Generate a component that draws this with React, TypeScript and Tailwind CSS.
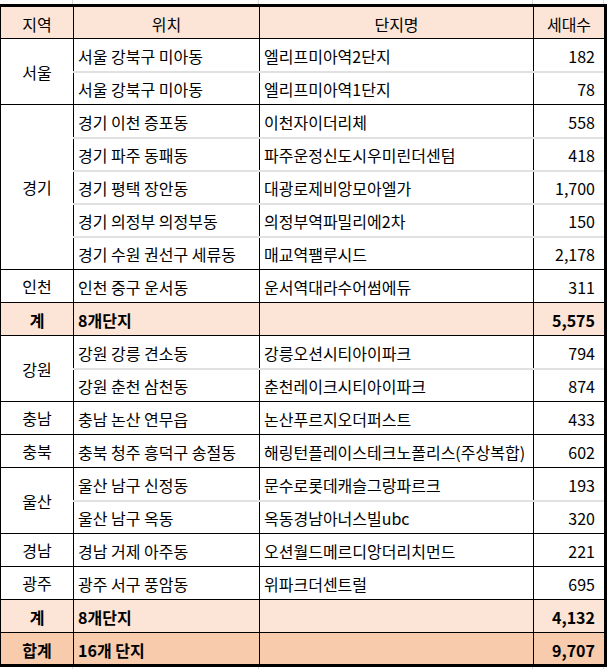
import React from "react";

type Row = { loc: string; name: string; count: string };
type Group = { region: string; rows: Row[] };

const groupsA: Group[] = [
  {
    region: "서울",
    rows: [
      { loc: "서울 강북구 미아동", name: "엘리프미아역2단지", count: "182" },
      { loc: "서울 강북구 미아동", name: "엘리프미아역1단지", count: "78" },
    ],
  },
  {
    region: "경기",
    rows: [
      { loc: "경기 이천 증포동", name: "이천자이더리체", count: "558" },
      { loc: "경기 파주 동패동", name: "파주운정신도시우미린더센텀", count: "418" },
      { loc: "경기 평택 장안동", name: "대광로제비앙모아엘가", count: "1,700" },
      { loc: "경기 의정부 의정부동", name: "의정부역파밀리에2차", count: "150" },
      { loc: "경기 수원 권선구 세류동", name: "매교역팰루시드", count: "2,178" },
    ],
  },
  {
    region: "인천",
    rows: [{ loc: "인천 중구 운서동", name: "운서역대라수어썸에듀", count: "311" }],
  },
];

const groupsB: Group[] = [
  {
    region: "강원",
    rows: [
      { loc: "강원 강릉 견소동", name: "강릉오션시티아이파크", count: "794" },
      { loc: "강원 춘천 삼천동", name: "춘천레이크시티아이파크", count: "874" },
    ],
  },
  {
    region: "충남",
    rows: [{ loc: "충남 논산 연무읍", name: "논산푸르지오더퍼스트", count: "433" }],
  },
  {
    region: "충북",
    rows: [{ loc: "충북 청주 흥덕구 송절동", name: "해링턴플레이스테크노폴리스(주상복합)", count: "602" }],
  },
  {
    region: "울산",
    rows: [
      { loc: "울산 남구 신정동", name: "문수로롯데캐슬그랑파르크", count: "193" },
      { loc: "울산 남구 옥동", name: "옥동경남아너스빌ubc", count: "320" },
    ],
  },
  {
    region: "경남",
    rows: [{ loc: "경남 거제 아주동", name: "오션월드메르디앙더리치먼드", count: "221" }],
  },
  {
    region: "광주",
    rows: [{ loc: "광주 서구 풍암동", name: "위파크더센트럴", count: "695" }],
  },
];

function GroupRows({ g }: { g: Group }) {
  return (
    <>
      {g.rows.map((r, i) => {
        const last = i === g.rows.length - 1;
        const bottom = last ? "border-b border-b-black" : "border-b-2 border-b-[#e1e1e1]";
        return (
          <tr key={i} className="h-[33px]">
            {i === 0 && (
              <td rowSpan={g.rows.length} className="border-b border-r border-black text-center align-middle">
                {g.region}
              </td>
            )}
            <td className={`${bottom} border-r border-r-black pl-[4px] pt-[2px]`}>{r.loc}</td>
            <td className={`${bottom} border-r border-r-black pl-[4px] pt-[2px]`}>{r.name}</td>
            <td className={`${bottom} border-r border-r-black pr-[9px] pt-[2px] text-right`}>{r.count}</td>
          </tr>
        );
      })}
    </>
  );
}

function SumRow({ label, desc, total, bg }: { label: string; desc: string; total: string; bg: string }) {
  return (
    <tr className={`h-[33px] font-bold ${bg}`}>
      <td className="border-b border-r border-black text-center pt-[2px]">{label}</td>
      <td className="border-b border-r border-black pl-[4px] pt-[2px]">{desc}</td>
      <td className="border-b border-r border-black"></td>
      <td className="border-b border-r border-black pr-[9px] pt-[2px] text-right">{total}</td>
    </tr>
  );
}

export default function App() {
  return (
    <div className="w-[607px] h-[669px] bg-white overflow-hidden text-[16px] leading-none text-black font-['Noto_Sans_CJK_KR','Noto_Sans',sans-serif]">
      {/* gridlines above the table */}
      <div className="flex h-[4px]">
        <div className="w-[73px] border-r border-[#dadada]"></div>
        <div className="w-[186px] border-r border-[#dadada]"></div>
        <div className="w-[274px] border-r border-[#dadada]"></div>
        <div className="w-[71px] border-r border-[#dadada]"></div>
      </div>
      <table className="table-fixed border-collapse w-[606px] border-t-[3px] border-r-[3px] border-b-[3px] border-l border-black">
        <colgroup>
          <col className="w-[73px]" />
          <col className="w-[186px]" />
          <col className="w-[274px]" />
          <col className="w-[72px]" />
        </colgroup>
        <tbody>
          <tr className="h-[33px] bg-[#fce4d6]">
            <td className="border-b border-r border-black text-center pt-[2px]">지역</td>
            <td className="border-b border-r border-black text-center pt-[2px]">위치</td>
            <td className="border-b border-r border-black text-center pt-[2px]">단지명</td>
            <td className="border-b border-r border-black text-center pt-[2px]">세대수</td>
          </tr>
          {groupsA.map((g) => (
            <GroupRows key={g.region} g={g} />
          ))}
          <SumRow label="계" desc="8개단지" total="5,575" bg="bg-[#fce4d6]" />
          {groupsB.map((g) => (
            <GroupRows key={g.region} g={g} />
          ))}
          <SumRow label="계" desc="8개단지" total="4,132" bg="bg-[#fce4d6]" />
          <SumRow label="합계" desc="16개 단지" total="9,707" bg="bg-[#f8cbad]" />
        </tbody>
      </table>
      <div className="flex h-[4px]">
        <div className="w-[73px] border-r border-[#dadada]"></div>
        <div className="w-[186px] border-r border-[#dadada]"></div>
        <div className="w-[274px] border-r border-[#dadada]"></div>
        <div className="w-[71px] border-r border-[#dadada]"></div>
      </div>
    </div>
  );
}
